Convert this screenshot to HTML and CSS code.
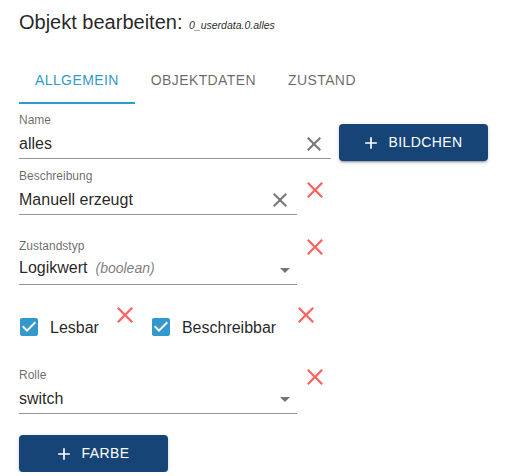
FILE: index.html
```html
<!DOCTYPE html>
<html lang="de">
<head>
<meta charset="utf-8">
<title>Objekt bearbeiten</title>
<link rel="stylesheet" href="styles.css">
</head>
<body>
<div class="page">
  <h2 class="title">Objekt bearbeiten: <span class="obj-id">0_userdata.0.alles</span></h2>

  <div class="tabs">
    <div class="tab active">Allgemein</div>
    <div class="tab">Objektdaten</div>
    <div class="tab">Zustand</div>
  </div>

  <div class="row row-name">
    <div class="field wide">
      <div class="label">Name</div>
      <div class="input">
        <span class="value">alles</span>
        <svg class="clear" viewBox="0 0 24 24"><path d="M19 6.41L17.59 5 12 10.59 6.41 5 5 6.41 10.59 12 5 17.59 6.41 19 12 13.41 17.59 19 19 17.59 13.41 12z"/></svg>
      </div>
    </div>
    <button class="btn btn-pic"><svg class="plus" viewBox="0 0 24 24"><path d="M19 13h-6v6h-2v-6H5v-2h6V5h2v6h6v2z"/></svg>Bildchen</button>
  </div>

  <div class="row row-desc">
    <div class="field narrow">
      <div class="label">Beschreibung</div>
      <div class="input">
        <span class="value">Manuell erzeugt</span>
        <svg class="clear" viewBox="0 0 24 24"><path d="M19 6.41L17.59 5 12 10.59 6.41 5 5 6.41 10.59 12 5 17.59 6.41 19 12 13.41 17.59 19 19 17.59 13.41 12z"/></svg>
      </div>
    </div>
    <svg class="xred" viewBox="5 5 14 14"><path d="M19 6.41L17.59 5 12 10.59 6.41 5 5 6.41 10.59 12 5 17.59 6.41 19 12 13.41 17.59 19 19 17.59 13.41 12z"/></svg>
  </div>

  <div class="row row-type">
    <div class="field narrow">
      <div class="label">Zustandstyp</div>
      <div class="input">
        <span class="value value-up">Logikwert<span class="hint">(boolean)</span></span>
        <svg class="arrow" viewBox="0 0 24 24"><path d="M7 10l5 5 5-5z"/></svg>
      </div>
    </div>
    <svg class="xred xred-type" viewBox="5 5 14 14"><path d="M19 6.41L17.59 5 12 10.59 6.41 5 5 6.41 10.59 12 5 17.59 6.41 19 12 13.41 17.59 19 19 17.59 13.41 12z"/></svg>
  </div>

  <div class="cb-row">
    <label class="cb">
      <svg class="cb-icon" viewBox="0 0 24 24"><path d="M19 3H5c-1.11 0-2 .9-2 2v14c0 1.1.89 2 2 2h14c1.11 0 2-.9 2-2V5c0-1.1-.89-2-2-2zm-9 14l-5-5 1.41-1.41L10 14.17l7.59-7.59L19 8l-9 9z"/></svg>
      <span class="cb-text">Lesbar</span>
    </label>
    <svg class="xred xred-cb" viewBox="5 5 14 14"><path d="M19 6.41L17.59 5 12 10.59 6.41 5 5 6.41 10.59 12 5 17.59 6.41 19 12 13.41 17.59 19 19 17.59 13.41 12z"/></svg>
    <label class="cb cb-second">
      <svg class="cb-icon" viewBox="0 0 24 24"><path d="M19 3H5c-1.11 0-2 .9-2 2v14c0 1.1.89 2 2 2h14c1.11 0 2-.9 2-2V5c0-1.1-.89-2-2-2zm-9 14l-5-5 1.41-1.41L10 14.17l7.59-7.59L19 8l-9 9z"/></svg>
      <span class="cb-text">Beschreibbar</span>
    </label>
    <svg class="xred xred-cb2" viewBox="5 5 14 14"><path d="M19 6.41L17.59 5 12 10.59 6.41 5 5 6.41 10.59 12 5 17.59 6.41 19 12 13.41 17.59 19 19 17.59 13.41 12z"/></svg>
  </div>

  <div class="row row-role">
    <div class="field narrow">
      <div class="label">Rolle</div>
      <div class="input">
        <span class="value">switch</span>
        <svg class="arrow" viewBox="0 0 24 24"><path d="M7 10l5 5 5-5z"/></svg>
      </div>
    </div>
    <svg class="xred xred-role" viewBox="5 5 14 14"><path d="M19 6.41L17.59 5 12 10.59 6.41 5 5 6.41 10.59 12 5 17.59 6.41 19 12 13.41 17.59 19 19 17.59 13.41 12z"/></svg>
  </div>

  <button class="btn btn-color"><svg class="plus" viewBox="0 0 24 24"><path d="M19 13h-6v6h-2v-6H5v-2h6V5h2v6h6v2z"/></svg>Farbe</button>
</div>
</body>
</html>
```
FILE: styles.css
```css
html, body {
  margin: 0;
  padding: 0;
  background: #ffffff;
  font-family: "Liberation Sans", Arial, sans-serif;
  color: rgba(0, 0, 0, 0.87);
}

.page {
  padding: 10px 0 0 19px;
  display: flex;
  flex-direction: column;
  align-items: flex-start;
}

.title {
  margin: 0;
  font-size: 20px;
  line-height: 24px;
  font-weight: 400;
  color: rgba(0, 0, 0, 0.87);
}

.obj-id {
  font-size: 10.5px;
  line-height: 1;
  font-style: italic;
  margin-left: 1px;
}

.tabs {
  display: flex;
  margin-top: 22px;
}

.tab {
  box-sizing: border-box;
  height: 48px;
  padding: 2px 16px 0;
  display: flex;
  align-items: center;
  font-size: 14px;
  font-weight: 400;
  letter-spacing: 0.4px;
  text-transform: uppercase;
  color: rgba(0, 0, 0, 0.6);
  border-bottom: 2px solid transparent;
}

.tab.active {
  color: #3399cc;
  border-bottom-color: #3399cc;
}

.row {
  display: flex;
  align-items: flex-start;
}

.row-name { margin-top: 9px; }
.row-desc { margin-top: 8px; }
.row-type { margin-top: 24px; }
.row-role { margin-top: 20px; }

.field {
  display: flex;
  flex-direction: column;
}

.field.wide { width: 312px; }
.field.narrow { width: 278px; }

.label {
  font-size: 12px;
  line-height: 14px;
  color: rgba(0, 0, 0, 0.6);
}

.input {
  display: flex;
  align-items: center;
  height: 29px;
  padding-top: 2px;
  border-bottom: 1px solid rgba(0, 0, 0, 0.42);
}

.value {
  flex: 1;
  font-size: 16px;
  line-height: 19px;
  color: rgba(0, 0, 0, 0.87);
  white-space: nowrap;
}

.value-up {
  margin-bottom: 4px;
}

.hint {
  margin-left: 8px;
  font-size: 14px;
  font-style: italic;
  color: rgba(0, 0, 0, 0.54);
}

.clear {
  width: 24px;
  height: 24px;
  margin-right: 5px;
  fill: rgba(0, 0, 0, 0.54);
  flex: none;
}

.arrow {
  width: 24px;
  height: 24px;
  fill: rgba(0, 0, 0, 0.54);
  flex: none;
}

.xred {
  width: 16px;
  height: 16px;
  fill: #ff6262;
  flex: none;
  margin-left: 10px;
}

.row-desc .xred { margin-top: 13px; }
.xred-type { margin-top: 0; }
.xred-role { margin-top: 1px; }

.btn {
  box-sizing: border-box;
  width: 149px;
  height: 37px;
  padding: 6px 16px;
  display: inline-flex;
  align-items: center;
  justify-content: center;
  border: none;
  border-radius: 4px;
  background: #164477;
  color: #ffffff;
  font-family: "Liberation Sans", Arial, sans-serif;
  font-size: 14px;
  font-weight: 400;
  letter-spacing: 0.4px;
  line-height: 25px;
  text-transform: uppercase;
  box-shadow: 0 3px 1px -2px rgba(0, 0, 0, 0.2), 0 2px 2px 0 rgba(0, 0, 0, 0.14), 0 1px 5px 0 rgba(0, 0, 0, 0.12);
}

.btn-pic {
  margin-top: 11px;
  margin-left: 8px;
}

.btn-color {
  margin-top: 21px;
}

.plus {
  width: 20px;
  height: 20px;
  fill: #ffffff;
  margin-left: -4px;
  margin-right: 8px;
  flex: none;
}

.cb-row {
  display: flex;
  align-items: flex-start;
  margin-top: 21px;
  margin-left: -11px;
}

.cb {
  display: flex;
  align-items: center;
  height: 42px;
}

.cb-icon {
  width: 24px;
  height: 24px;
  padding: 9px;
  fill: #3399cc;
  flex: none;
}

.cb-text {
  font-size: 16px;
  line-height: 19px;
  color: rgba(0, 0, 0, 0.87);
}

.xred-cb {
  margin-top: 1px;
  margin-left: 18px;
}

.xred-cb2 {
  margin-top: 1px;
  margin-left: 22px;
}

.cb-second {
  margin-left: 7px;
}
```
